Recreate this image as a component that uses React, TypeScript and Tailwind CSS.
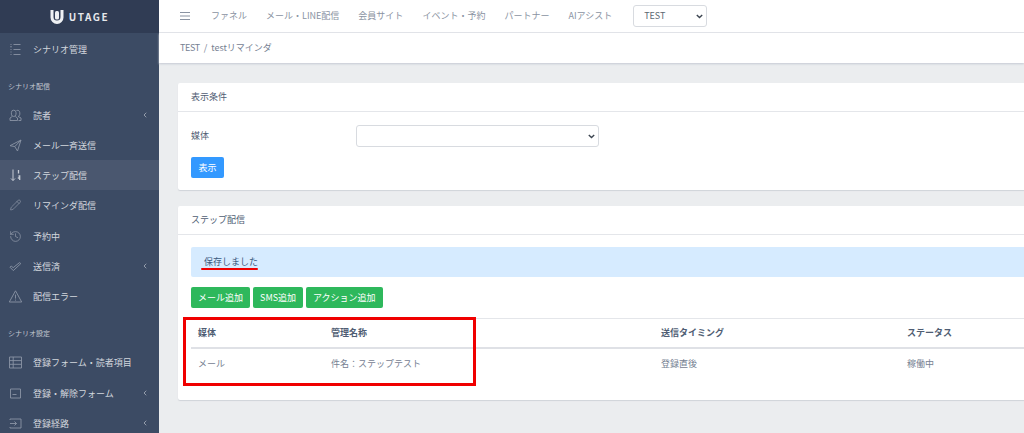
import { ChevronLeft, History, Pencil } from "lucide-react";

const FONT = "font-['Noto_Sans_CJK_JP','Noto_Sans',sans-serif]";

// coreui-style outline icons, drawn on a 13px box
const Svg = ({ d, className = "text-[#8a94a5]" }: { d: string; className?: string }) => (
  <svg width="13" height="13" viewBox="0 0 13 13" fill="none" stroke="currentColor" strokeWidth="0.9" className={`shrink-0 ${className}`}>
    <path d={d} />
  </svg>
);

const ICONS = {
  list: "M1.5 1.5h1M1.5 6.5h1M1.5 11.5h1M4.5 1.5h7M4.5 6.5h7M4.5 11.5h7M1.5 3.5h1M1.5 4h1M1.5 9h1",
  people: "M4.7 1.2a2.3 2.3 0 0 1 2.3 2.3v1.7a2.3 2.3 0 0 1-4.6 0V3.5a2.3 2.3 0 0 1 2.3-2.3zM3.2 7.5 1 9v2.5h7.5V9L6.3 7.5M7.5 1.5c2-.6 3.3.6 3.3 2.2v1.5c0 1.2-.8 2-1.8 2.2l3 1.6v2.5H9.5",
  send: "M1 6.7 12 1 8.5 12 5.8 7.6zM5.8 7.6 12 1",
  check: "M1 7.2 2.2 6l2 1.7L10.5 2.6l1.3 1L4.3 10.6z",
  alert: "M6.5 .8 12.7 12H.3zM6.5 4.6v4M6.5 9.6v1",
  table: "M.5 1h12v11H.5zM4.2 1v11M.5 4.6h12M.5 8.3h12",
  form: "M1.5 2h10v9h-10zM3.5 7.5h4",
  login: "M1 3V2h11v9H1v-1M1 6.5h6.5M5.5 4.5l2 2-2 2",
};

const StepIcon = () => (
  <svg width="13" height="13" viewBox="0 0 13 13" fill="none" stroke="#c6cbd4" strokeWidth="1" className="shrink-0">
    <path d="M4 .5v11M2 9.5l2 2 2-2" />
    <path d="M9.5 1v3.5M9.5 7h1.2v4M8.8 9h1.9" strokeWidth="1.3" />
  </svg>
);

const SideItem = ({ icon, label, arrow, active }: any) => (
  <div className={`flex h-[30px] shrink-0 items-center pl-[9px] pr-[10px] ${active ? "bg-[#4a576f]" : ""}`}>
    {icon}
    <span className="ml-[11px] flex-1 pt-px text-[9px] text-[#d3d7de]">{label}</span>
    {arrow && <ChevronLeft className="h-[8px] w-[8px] text-[#c0c5cf]" strokeWidth={2} />}
  </div>
);

const SideLabel = ({ label }: { label: string }) => (
  <div className="flex h-[36px] shrink-0 items-center pl-[8px] pt-[8px] text-[7px] text-[#c3c8d1]">{label}</div>
);

const Sidebar = () => (
  <aside className="flex h-full w-[159px] shrink-0 flex-col bg-[#3c4b64]">
    <div className="flex h-[33px] shrink-0 items-center justify-center gap-[5px] bg-[#303c54]">
      <svg width="14" height="15" viewBox="0 0 14 15">
        <path d="M.5 1h3v7a3.5 3.5 0 0 0 7 0V1h3v7.5a6.5 6.5 0 0 1-13 0z" fill="#eef0f3" />
        <rect x="5" y="2" width="4" height="8.5" rx="1.5" fill="#eef0f3" />
      </svg>
      <span className="text-[10px] font-bold tracking-[1.5px] text-[#e6e8ec]">UTAGE</span>
    </div>
    <div className="h-px shrink-0" />
    <SideItem icon={<Svg d={ICONS.list} />} label="シナリオ管理" />
    <SideLabel label="シナリオ配信" />
    <SideItem icon={<Svg d={ICONS.people} />} label="読者" arrow />
    <SideItem icon={<Svg d={ICONS.send} />} label="メール一斉送信" />
    <SideItem icon={<StepIcon />} label="ステップ配信" active />
    <SideItem icon={<Pencil className="h-[12px] w-[13px] shrink-0 text-[#9aa3b2]" strokeWidth={1.2} />} label="リマインダ配信" />
    <div className="h-px shrink-0" />
    <SideItem icon={<History className="h-[13px] w-[13px] shrink-0 text-[#9aa3b2]" strokeWidth={1.2} />} label="予約中" />
    <SideItem icon={<Svg d={ICONS.check} />} label="送信済" arrow />
    <SideItem icon={<Svg d={ICONS.alert} />} label="配信エラー" />
    <SideLabel label="シナリオ設定" />
    <SideItem icon={<Svg d={ICONS.table} />} label="登録フォーム・読者項目" />
    <div className="h-px shrink-0" />
    <SideItem icon={<Svg d={ICONS.form} />} label="登録・解除フォーム" arrow />
    <SideItem icon={<Svg d={ICONS.login} />} label="登録経路" arrow />
  </aside>
);

const Select = ({ value, className }: { value?: string; className: string }) => (
  <div className={`relative h-[22px] ${className}`}>
    <select className="h-full w-full appearance-none rounded-[3px] border border-[#d8dbe0] bg-white pl-[10px] text-[9px] text-[#5c6873]">
      <option>{value}</option>
    </select>
    <svg width="7" height="5" viewBox="0 0 7 5" fill="none" stroke="#3c4550" strokeWidth="1.4" className="pointer-events-none absolute right-[4px] top-[9px]">
      <path d="M.8 1 3.5 3.6 6.2 1" />
    </svg>
  </div>
);

const TopNav = () => (
  <header className="flex h-[33px] shrink-0 items-center border-b border-[#e4e6ea] bg-white pl-[21px] text-[9px] text-[#8a93a2]">
    <svg width="10" height="10" viewBox="0 0 10 10" stroke="#8a93a2" strokeWidth="1">
      <path d="M0 1.5h10M0 5h10M0 8.5h10" />
    </svg>
    <nav className="ml-[21px] flex gap-[19px]">
      <span>ファネル</span>
      <span>メール・LINE配信</span>
      <span>会員サイト</span>
      <span>イベント・予約</span>
      <span>パートナー</span>
      <span>AIアシスト</span>
    </nav>
    <Select value="TEST" className="ml-[21px] w-[74px]" />
  </header>
);

const Card = ({ title, children }: any) => (
  <section className="w-[860px] rounded-[2px] bg-white shadow-[0_1px_1px_#d0d3d9]">
    <div className="flex h-[29px] items-center border-b border-[#e4e6ea] pl-[13px] text-[9px] text-[#4f5d73]">{title}</div>
    {children}
  </section>
);

const GreenButton = ({ label }: { label: string }) => (
  <button className="flex h-[21px] items-center rounded-[2px] bg-[#2eb85c] px-[7px] text-[9px] text-white">{label}</button>
);

const StepTable = () => (
  <table className="mt-[10px] w-[847px] table-fixed border-t border-[#e4e6ea] text-left text-[9px]">
    <tbody>
      <tr className="h-[29px] border-b-2 border-[#dfe1e6] font-bold text-[#4f5d73]">
        <th className="w-[140px] pl-[7px]">媒体</th>
        <th className="w-[330px]">管理名称</th>
        <th className="w-[246px]">送信タイミング</th>
        <th>ステータス</th>
      </tr>
      <tr className="h-[31px] text-[#768192]">
        <td className="pl-[7px]">メール</td>
        <td>件名：ステップテスト</td>
        <td>登録直後</td>
        <td>稼働中</td>
      </tr>
    </tbody>
  </table>
);

const App = () => (
  <div className={`relative flex h-[433px] w-[1024px] overflow-hidden bg-[#ebedef] ${FONT}`}>
    <Sidebar />
    <main className="min-w-0 flex-1">
      <TopNav />
      <div className="flex h-[30px] items-center gap-[4px] bg-white pl-[21px] text-[9px] text-[#768192] shadow-[0_1px_2px_#c5c9d3]">
        <span className="tracking-[-0.4px]">TEST</span>
        <span>/</span>
        <span>testリマインダ</span>
      </div>
      <div className="flex flex-col gap-[16px] pl-[19px] pt-[20px]">
        <Card title="表示条件">
          <div className="h-[78px] px-[13px] pt-[13px]">
            <div className="flex items-center text-[9px] text-[#4f5d73]">
              <span className="w-[165px]">媒体</span>
              <Select className="w-[243px]" />
            </div>
            <button className="mt-[10px] flex h-[21px] w-[33px] items-center justify-center rounded-[2px] bg-[#39f] text-[9px] text-white">表示</button>
          </div>
        </Card>
        <Card title="ステップ配信">
          <div className="pb-[21px] pt-[12px]">
            <div className="ml-[13px] flex h-[30px] items-center rounded-[2px] bg-[#d6ebff] pl-[13px] text-[9px] text-[#3c5a80]">保存しました</div>
            <div className="ml-[13px] mt-[10px] flex gap-[3px]">
              <GreenButton label="メール追加" />
              <GreenButton label="SMS追加" />
              <GreenButton label="アクション追加" />
            </div>
            <div className="ml-[13px]"><StepTable /></div>
          </div>
        </Card>
      </div>
    </main>
    <div className="absolute left-[201px] top-[268px] h-[2px] w-[57px] rounded-full bg-[#f00000]" />
    <div className="absolute left-[183px] top-[317px] h-[69px] w-[293px] border-[3px] border-[#f00000]" />
  </div>
);

export default App;
